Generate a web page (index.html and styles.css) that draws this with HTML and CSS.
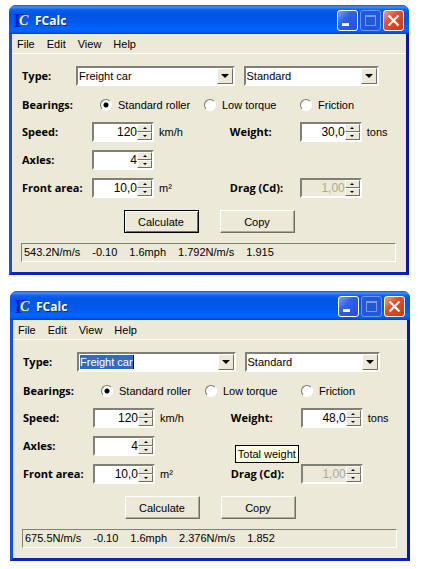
FILE: index.html
```html
<!DOCTYPE html>
<html lang="en">
<head>
    <meta charset="utf-8">
    <meta name="viewport" content="width=device-width, initial-scale=1.0">
    <title>FCalc</title>

    <link rel="stylesheet" href="styles.css">
</head>

<body>
    <main class="desktop">

        <section class="window">
            <header class="titlebar">
                <svg class="logo" viewBox="0 0 16 16" aria-hidden="true">
                    <text class="logo-f" x="0" y="14">F</text>
                    <text class="logo-c" x="5" y="12">C</text>
                </svg>
                <h1>FCalc</h1>
                <button class="win-btn" aria-label="Minimize"><svg viewBox="0 0 21 21"><rect x="5" y="13" width="7" height="3" fill="#fff"/></svg></button>
                <button class="win-btn win-max" aria-label="Maximize" disabled><svg viewBox="0 0 21 21"><path d="M5.500 6v9.500h10V6M5 6h11" fill="none" stroke="#7d9df0" stroke-width="1"/><rect x="5" y="5" width="11" height="2" fill="#7d9df0"/></svg></button>
                <button class="win-btn win-close" aria-label="Close"><svg viewBox="0 0 21 21"><path d="M5.500 5.500l10 10M15.500 5.500l-10 10" stroke="#fff" stroke-width="2.200"/></svg></button>
            </header>
            <nav class="menu">
                <a href="#">File</a>
                <a href="#">Edit</a>
                <a href="#">View</a>
                <a href="#">Help</a>
            </nav>

            <form>
                <div class="row types">
                    <label for="type1">Type:</label>
                    <div class="combo combo-type">
                        <select id="type1"><option>Freight car</option></select>
                        <span class="arrow"></span>
                    </div>
                    <div class="combo combo-variant">
                        <select aria-label="Variant"><option>Standard</option></select>
                        <span class="arrow"></span>
                    </div>
                </div>

                <div class="row bearings" role="radiogroup" aria-labelledby="bearings1">
                    <b id="bearings1">Bearings:</b>
                    <label class="radio-roller"><input type="radio" name="bearing1" checked>Standard roller</label>
                    <label class="radio-torque"><input type="radio" name="bearing1">Low torque</label>
                    <label><input type="radio" name="bearing1">Friction</label>
                </div>

                <div class="fields">
                    <div class="row">
                        <label for="speed1">Speed:</label>
                        <div class="spin">
                            <input type="text" id="speed1" value="120">
                            <div class="spin-btns"><button type="button" class="up" aria-label="Increase"></button><button type="button" class="down" aria-label="Decrease"></button></div>
                        </div>
                        <span class="unit">km/h</span>
                    </div>
                    <div class="row">
                        <label for="weight1">Weight:</label>
                        <div class="spin">
                            <input type="text" id="weight1" value="30,0">
                            <div class="spin-btns"><button type="button" class="up" aria-label="Increase"></button><button type="button" class="down" aria-label="Decrease"></button></div>
                        </div>
                        <span class="unit">tons</span>
                    </div>
                    <div class="row wide">
                        <label for="axles1">Axles:</label>
                        <div class="spin">
                            <input type="text" id="axles1" value="4">
                            <div class="spin-btns"><button type="button" class="up" aria-label="Increase"></button><button type="button" class="down" aria-label="Decrease"></button></div>
                        </div>
                    </div>
                    <div class="row">
                        <label for="area1">Front area:</label>
                        <div class="spin">
                            <input type="text" id="area1" value="10,0">
                            <div class="spin-btns"><button type="button" class="up" aria-label="Increase"></button><button type="button" class="down" aria-label="Decrease"></button></div>
                        </div>
                        <span class="unit">m²</span>
                    </div>
                    <div class="row">
                        <label for="drag1">Drag (Cd):</label>
                        <div class="spin">
                            <input type="text" id="drag1" value="1,00" disabled>
                            <div class="spin-btns"><button type="button" class="up" aria-label="Increase"></button><button type="button" class="down" aria-label="Decrease"></button></div>
                        </div>
                    </div>
                </div>

                <div class="actions">
                    <button type="button" class="btn btn-default">Calculate</button>
                    <button type="button" class="btn">Copy</button>
                </div>
            </form>

            <footer class="status">
                <span>543.2N/m/s</span>
                <span>-0.10</span>
                <span>1.6mph</span>
                <span>1.792N/m/s</span>
                <span>1.915</span>
            </footer>
        </section>

        <section class="window">
            <header class="titlebar">
                <svg class="logo" viewBox="0 0 16 16" aria-hidden="true">
                    <text class="logo-f" x="0" y="14">F</text>
                    <text class="logo-c" x="5" y="12">C</text>
                </svg>
                <h1>FCalc</h1>
                <button class="win-btn" aria-label="Minimize"><svg viewBox="0 0 21 21"><rect x="5" y="13" width="7" height="3" fill="#fff"/></svg></button>
                <button class="win-btn win-max" aria-label="Maximize" disabled><svg viewBox="0 0 21 21"><path d="M5.500 6v9.500h10V6M5 6h11" fill="none" stroke="#7d9df0" stroke-width="1"/><rect x="5" y="5" width="11" height="2" fill="#7d9df0"/></svg></button>
                <button class="win-btn win-close" aria-label="Close"><svg viewBox="0 0 21 21"><path d="M5.500 5.500l10 10M15.500 5.500l-10 10" stroke="#fff" stroke-width="2.200"/></svg></button>
            </header>
            <nav class="menu">
                <a href="#">File</a>
                <a href="#">Edit</a>
                <a href="#">View</a>
                <a href="#">Help</a>
            </nav>

            <form>
                <div class="row types">
                    <label for="type2">Type:</label>
                    <div class="combo combo-type editing">
                        <select id="type2"><option>Freight car</option></select>
                        <span class="arrow"></span>
                    </div>
                    <div class="combo combo-variant">
                        <select aria-label="Variant"><option>Standard</option></select>
                        <span class="arrow"></span>
                    </div>
                </div>

                <div class="row bearings" role="radiogroup" aria-labelledby="bearings2">
                    <b id="bearings2">Bearings:</b>
                    <label class="radio-roller"><input type="radio" name="bearing2" checked>Standard roller</label>
                    <label class="radio-torque"><input type="radio" name="bearing2">Low torque</label>
                    <label><input type="radio" name="bearing2">Friction</label>
                </div>

                <div class="fields">
                    <div class="row">
                        <label for="speed2">Speed:</label>
                        <div class="spin">
                            <input type="text" id="speed2" value="120">
                            <div class="spin-btns"><button type="button" class="up" aria-label="Increase"></button><button type="button" class="down" aria-label="Decrease"></button></div>
                        </div>
                        <span class="unit">km/h</span>
                    </div>
                    <div class="row has-tip">
                        <label for="weight2">Weight:</label>
                        <div class="spin">
                            <input type="text" id="weight2" value="48,0" aria-describedby="tip">
                            <div class="spin-btns"><button type="button" class="up" aria-label="Increase"></button><button type="button" class="down" aria-label="Decrease"></button></div>
                        </div>
                        <span class="unit">tons</span>
                        <span class="tooltip" id="tip" role="tooltip">Total weight</span>
                    </div>
                    <div class="row wide">
                        <label for="axles2">Axles:</label>
                        <div class="spin">
                            <input type="text" id="axles2" value="4">
                            <div class="spin-btns"><button type="button" class="up" aria-label="Increase"></button><button type="button" class="down" aria-label="Decrease"></button></div>
                        </div>
                    </div>
                    <div class="row">
                        <label for="area2">Front area:</label>
                        <div class="spin">
                            <input type="text" id="area2" value="10,0">
                            <div class="spin-btns"><button type="button" class="up" aria-label="Increase"></button><button type="button" class="down" aria-label="Decrease"></button></div>
                        </div>
                        <span class="unit">m²</span>
                    </div>
                    <div class="row">
                        <label for="drag2">Drag (Cd):</label>
                        <div class="spin">
                            <input type="text" id="drag2" value="1,00" disabled>
                            <div class="spin-btns"><button type="button" class="up" aria-label="Increase"></button><button type="button" class="down" aria-label="Decrease"></button></div>
                        </div>
                    </div>
                </div>

                <div class="actions">
                    <button type="button" class="btn">Calculate</button>
                    <button type="button" class="btn">Copy</button>
                </div>
            </form>

            <footer class="status">
                <span>675.5N/m/s</span>
                <span>-0.10</span>
                <span>1.6mph</span>
                <span>2.376N/m/s</span>
                <span>1.852</span>
            </footer>
        </section>

    </main>
</body>
</html>
```
FILE: styles.css
```css
* {
    box-sizing: border-box;
}

body {
    margin: 0;
    background: #fff;
    color: #000;
    font: 11px/14px "Liberation Sans", Arial, sans-serif;
}

button, input, select {
    margin: 0;
    padding: 0;
    font: inherit;
    color: inherit;
    border-radius: 0;
}

.desktop {
    display: flex;
    flex-direction: column;
    gap: 16px;
    padding: 5px 13px 8px 9px;
}

.window {
    margin-right: 1px;
    background: #ece9d8;
    border: 3px solid #0831d9;
    border-top: 0;
    border-color: #0a4be0 #0019a8 #0726b4 #1650dc;
    border-radius: 7px 7px 0 0;
}

/* second window is cascaded a little to the right */
.window + .window {
    margin-right: 0;
    margin-left: 1px;
}

/* title bar */
.titlebar {
    display: flex;
    align-items: center;
    gap: 2px;
    height: 29px;
    margin: 0 -3px;
    padding: 2px 5px 0;
    border-radius: 7px 7px 0 0;
    background: linear-gradient(#0d5be0, #3c92fb 7%, #0a63ee 16%, #0054e3 30%, #0058ee 60%, #0066ff 85%, #005bf5 93%, #0040c8);
}

.logo {
    width: 16px;
    height: 16px;
    overflow: visible;
}

.logo-f {
    font: bold 18px "Liberation Serif", serif;
    fill: #0a1fc0;
}

.logo-c {
    font: italic bold 14px "Liberation Serif", serif;
    fill: #f4f77a;
}

h1 {
    flex: 1;
    margin: 0;
    padding-left: 3px;
    font: bold 12px/16px "Open Sans", sans-serif;
    color: #fff;
    text-shadow: 1px 1px #0a2a8c;
}

.win-btn {
    width: 21px;
    height: 21px;
    border: 1px solid #fff;
    border-radius: 3px;
    background: linear-gradient(135deg, #7ba2f5, #2f62e6 40%, #1f50d8);
}

.win-btn svg {
    display: block;
    width: 21px;
    height: 21px;
    margin: -1px;
}

.win-max {
    border-color: #6f97f2;
    background: #2158dc;
}

.win-close {
    background: linear-gradient(135deg, #f0a088, #e0502c 40%, #c83c14);
}

/* menu */
.menu {
    display: flex;
    gap: 12px;
    height: 20px;
    padding: 3px 5px 0;
    border-bottom: 1px solid #fff;
}

.menu a {
    color: #000;
    text-decoration: none;
}

/* form */
form {
    padding: 8px 10px 0;
}

.row {
    display: flex;
    align-items: center;
    height: 28px;
}

.row > label:first-child, .row > b {
    width: 70px;
    font: bold 11px/14px "Open Sans", sans-serif;
}

.types {
    padding-right: 17px;
}

.row.types > label {
    width: 54px;
}

.combo, .spin {
    display: flex;
    height: 20px;
    border: 2px solid;
    border-color: #808076 #fff #fff #808076;
    background: #fff;
}

.combo {
    padding-left: 1px;
}

.combo-type {
    flex: 20;
    margin-right: 9px;
}

.combo-variant {
    flex: 17;
}

select {
    flex: 1;
    appearance: none;
    border: 0;
    background: none;
    outline: 0;
}

/* text marked inside the box */
.editing select {
    flex: none;
    align-self: center;
    height: 14px;
    background: #316ac5;
    color: #fff;
    border-right: 1px solid #000;
}

.arrow {
    display: flex;
    align-items: center;
    justify-content: center;
    width: 16px;
    margin-left: auto;
    border: 1px solid;
    border-color: #fff #716f64 #716f64 #fff;
    background: #ece9d8;
    pointer-events: none;
}

.arrow::before {
    content: "";
    border: 4px solid transparent;
    border-top-color: #000;
    border-bottom: 0;
}

.bearings {
    padding-top: 2px;
}

.row.bearings > b {
    width: 78px;
}

.bearings label {
    display: flex;
    align-items: center;
    gap: 6px;
}

.radio-roller {
    width: 104px;
}

.radio-torque {
    width: 96px;
}

input[type="radio"] {
    appearance: none;
    width: 12px;
    height: 12px;
    border: 1px solid;
    border-color: #77756a #fff #fff #77756a;
    border-radius: 50%;
    background: #fff;
}

input[type="radio"]:checked {
    background: radial-gradient(circle, #000 2px, #fff 3px);
}

.fields {
    display: grid;
    grid-template-columns: 5fr 4fr;
}

.wide {
    grid-column: 1 / -1;
}

.spin {
    width: 62px;
}

.spin input {
    flex: 1;
    min-width: 0;
    border: 0;
    background: #fff;
    text-align: right;
    outline: 0;
    font-size: 12px;
}

.spin input:disabled {
    background: #ece9d8;
    color: #aca899;
}

.spin-btns {
    display: flex;
    flex-direction: column;
    width: 15px;
}

.spin-btns button {
    display: flex;
    flex: 1;
    align-items: center;
    justify-content: center;
    border: 1px solid;
    border-color: #fff #716f64 #716f64 #fff;
    background: #ece9d8;
}

.spin-btns button::before {
    content: "";
    border: 2px solid transparent;
}

.up::before {
    border-top: 0 !important;
    border-bottom-color: #000 !important;
}

.down::before {
    border-bottom: 0 !important;
    border-top-color: #000 !important;
}

.unit {
    padding-left: 5px;
}

.has-tip {
    position: relative;
}

.tooltip {
    position: absolute;
    left: 4px;
    top: 41px;
    padding: 1px 2px;
    border: 1px solid #000;
    background: #ffffe1;
    white-space: nowrap;
}

.actions {
    display: flex;
    justify-content: center;
    gap: 21px;
    padding: 8px 0 10px;
}

.btn {
    width: 75px;
    height: 23px;
    border: 1px solid;
    border-color: #fff #716f64 #716f64 #fff;
    background: #ece9d8;
    box-shadow: inset -1px -1px #aca899;
}

.btn-default {
    border-color: #000;
    box-shadow: inset 1px 1px #fff, inset -1px -1px #716f64;
}

/* result line */
.status {
    display: flex;
    gap: 12px;
    height: 19px;
    margin: 0 10px 10px 9px;
    padding: 1px 2px;
    border: 1px solid;
    border-color: #808076 #fff #fff #808076;
}
```
